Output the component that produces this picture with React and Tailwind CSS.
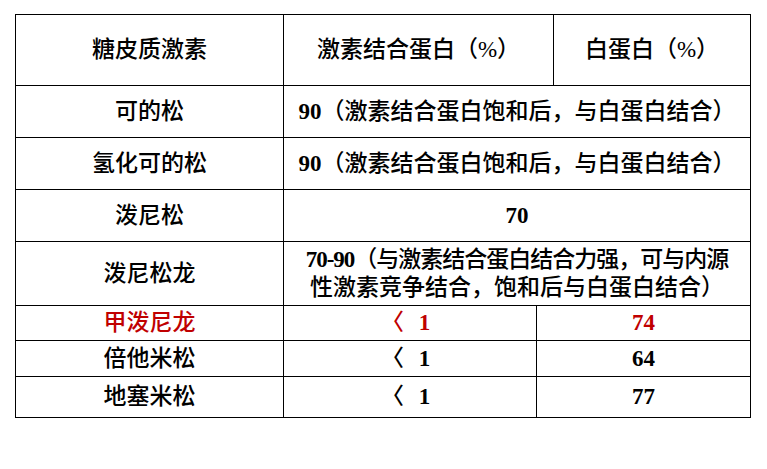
import React from "react";

const font = {
  fontFamily: '"Liberation Serif", "Noto Sans CJK SC", serif',
};

// numbers in the source are set heavier than the Chinese text
function N({ children }) {
  return <span className="font-bold">{children}</span>;
}

const rows = [
  { name: "可的松", num: "90", rest: "（激素结合蛋白饱和后，与白蛋白结合）", h: "h-[52px]" },
  { name: "氢化可的松", num: "90", rest: "（激素结合蛋白饱和后，与白蛋白结合）", h: "h-[52px]" },
  { name: "泼尼松", num: "70", rest: "", h: "h-[52px]" },
];

const lowRows = [
  { name: "甲泼尼龙", b: "74", red: true, h: "h-[35px]" },
  { name: "倍他米松", b: "64", h: "h-[36px]" },
  { name: "地塞米松", b: "77", h: "h-[41px]" },
];

export default function App() {
  const cell = "border border-black text-center align-middle p-0";

  return (
    <div className="w-[767px] h-[469px] bg-white pt-[14px] pl-[15px]" style={font}>
      <table className="table-fixed border-collapse w-[735px] text-[23px] leading-[28px] font-medium text-black">
        <colgroup>
          <col className="w-[268px]" />
          <col className="w-[253px]" />
          <col className="w-[17px]" />
          <col className="w-[197px]" />
        </colgroup>
        <tbody>
          {/* header */}
          <tr className="h-[71px]">
            <td className={cell}>糖皮质激素</td>
            <td className={cell} colSpan={2}>激素结合蛋白（%）</td>
            <td className={cell}>白蛋白（%）</td>
          </tr>

          {rows.map((r) => (
            <tr key={r.name} className={r.h}>
              <td className={cell}>{r.name}</td>
              <td className={cell} colSpan={3}>
                <N>{r.num}</N>
                {r.rest}
              </td>
            </tr>
          ))}

          <tr className="h-[64px]">
            <td className={cell}>泼尼松龙</td>
            <td className={`${cell} whitespace-nowrap`} colSpan={3}>
              <span className="tracking-[-1px]">
                <N>70-90</N>（与激素结合蛋白结合力强，可与内源
              </span>
              <br />
              性激素竞争结合，饱和后与白蛋白结合）
            </td>
          </tr>

          {lowRows.map((r) => (
            <tr key={r.name} className={`${r.h} ${r.red ? "text-[#c00000]" : ""}`}>
              <td className={cell}>{r.name}</td>
              <td className={cell}>
                {/* the angle glyph sits in the right half of its box, nudge it left */}
                <span className="inline-block -translate-x-[9px]">〈</span> <N>1</N>
              </td>
              <td className={cell} colSpan={2}>
                <N>{r.b}</N>
              </td>
            </tr>
          ))}
        </tbody>
      </table>
    </div>
  );
}
